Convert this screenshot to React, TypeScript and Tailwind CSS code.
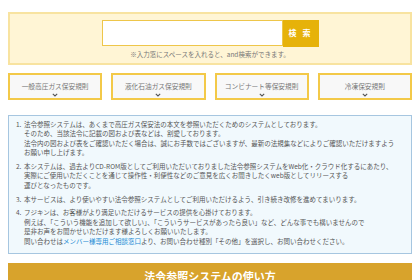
import React from "react";

const categories = ["一般高圧ガス保安規則", "液化石油ガス保安規則", "コンビナート等保安規則", "冷凍保安規則"];

function Chevron() {
  return (
    <svg width="6" height="4" viewBox="0 0 6 4" className="mt-[3px]">
      <path d="M0.8 0.8 L3 3 L5.2 0.8" fill="none" stroke="#555" strokeWidth="1.1" />
    </svg>
  );
}

export default function App() {
  return (
    <div
      className="w-[420px] h-[280px] overflow-hidden bg-white px-2 pt-3 text-[#555]"
      style={{ fontFamily: '"Noto Sans CJK JP", "Noto Sans", sans-serif' }}
    >
      {/* Search */}
      <div className="border-2 border-[#f8e3a0] bg-[#fff5d5] pt-[6px] pb-[4px]">
        <div className="flex justify-center">
          <div className="w-[181px] h-[26px] border border-[#eec64a] bg-white" />
          <button className="w-[36px] h-[27px] -mt-[0.5px] bg-[#e6b20a] text-white text-[8px] font-bold tracking-[2px]">
            検 索
          </button>
        </div>
        <p className="mt-[3px] text-center text-[6.5px] leading-[9px] text-[#777]">
          ※入力窓にスペースを入れると、and検索ができます。
        </p>
      </div>

      {/* Categories */}
      <div className="mt-[8px] grid grid-cols-4 gap-[9px]">
        {categories.map((c) => (
          <button
            key={c}
            className="h-[27px] border-2 border-[#f3c948] bg-[#f8f8f8] flex flex-col items-center justify-end pb-[1px]"
          >
            <span className="text-[6.7px] leading-[8px] text-[#777]">{c}</span>
            <Chevron />
          </button>
        ))}
      </div>

      {/* Notice */}
      <div className="mt-[15px] border border-[#a6c6e0] bg-[#f1f9fd] pl-[7px] pr-2 pt-[4px] pb-[6px] text-[6.5px] leading-[9.6px] text-[#555]">
        <div className="flex">
          <span className="w-[8px] shrink-0">1.</span>
          <p>
            法令参照システムは、あくまで高圧ガス保安法の本文を参照いただくためのシステムとしております。
            <br />
            そのため、当該法令に記載の図および表などは、割愛しております。
            <br />
            法令内の図および表をご確認いただく場合は、誠にお手数ではございますが、最新の法規集などによりご確認いただけますよう
            <br />
            お願い申し上げます。
          </p>
        </div>
        <div className="flex mt-[4px]">
          <span className="w-[8px] shrink-0">2.</span>
          <p>
            本システムは、過去よりCD-ROM版としてご利用いただいておりました法令参照システムをWeb化・クラウド化するにあたり、
            <br />
            実際にご使用いただくことを通じて操作性・利便性などのご意見を広くお聞きしたくweb版としてリリースする
            <br />
            運びとなったものです。
          </p>
        </div>
        <div className="flex mt-[4px]">
          <span className="w-[8px] shrink-0">3.</span>
          <p>本サービスは、より使いやすい法令参照システムとしてご利用いただけるよう、引き続き改修を進めてまいります。</p>
        </div>
        <div className="flex mt-[4px]">
          <span className="w-[8px] shrink-0">4.</span>
          <p>
            フジキンは、お客様がより満足いただけるサービスの提供を心掛けております。
            <br />
            例えば、「こういう機能を追加して欲しい」、「こういうサービスがあったら良い」など、どんな事でも構いませんので
            <br />
            是非お声をお聞かせいただけます様よろしくお願いいたします。
            <br />
            問い合わせは<a className="text-[#1a8ad4]">メンバー様専用ご相談窓口</a>より、お問い合わせ種別「その他」を選択し、お問い合わせください。
          </p>
        </div>
      </div>

      {/* Usage heading */}
      <div className="mt-[9px] h-[30px] bg-[#d8a32c] pt-[6px] text-center text-[11px] leading-[14px] font-bold text-white">
        法令参照システムの使い方
      </div>
    </div>
  );
}
